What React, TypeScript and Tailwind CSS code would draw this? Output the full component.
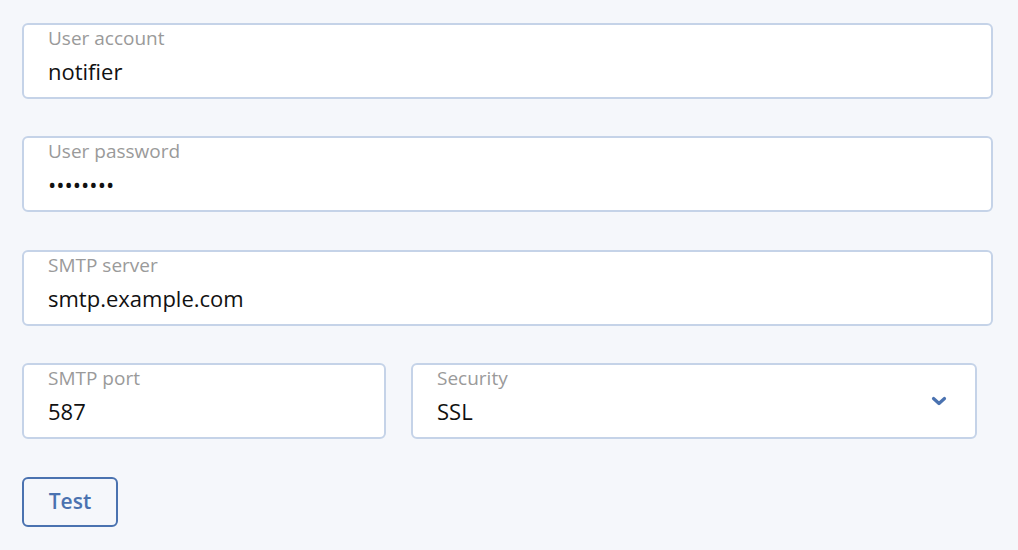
type FieldProps = {
  label: string;
  value: string;
  className?: string;
  select?: boolean;
};

function Field({ label, value, className, select }: FieldProps) {
  return (
    <div
      className={`flex h-[76px] rounded-[6px] border-2 border-[#c5d3e8] bg-white pl-[24px] pr-[28px] ${className ?? ""}`}
    >
      <div className="flex flex-1 flex-col pt-[1px]">
        <span className="text-[19px] leading-[24px] text-[#9a9a9a]">{label}</span>
        <span className="mt-[6px] text-[22px] leading-[30px] text-[#111]">{value}</span>
      </div>
      {select && (
        <div className="flex items-center">
          <svg width="16" height="10" viewBox="0 0 16 10" fill="none">
            <path d="M2.5 2.5l5.5 5 5.5-5" stroke="#4a72b0" strokeWidth="3.2" strokeLinecap="round" strokeLinejoin="round" />
          </svg>
        </div>
      )}
    </div>
  );
}

export default function App() {
  return (
    <div className="min-h-[550px] w-[1018px] bg-[#f5f7fb] px-[22px] pt-[23px] font-['Open_Sans',sans-serif]">
      <div className="flex w-[971px] flex-col gap-[37.34px]">
        <Field label="User account" value="notifier" />
        <Field label="User password" value="••••••••" />
        <Field label="SMTP server" value="smtp.example.com" />
        <div className="flex gap-[25px]">
          <Field label="SMTP port" value="587" className="w-[364px]" />
          <Field label="Security" value="SSL" className="w-[566px]" select />
        </div>
      </div>
      <button className="mt-[38px] h-[50px] w-[96px] rounded-[6px] border-2 border-[#4a72b0] text-[21px] font-semibold text-[#4a72b0]">
        Test
      </button>
    </div>
  );
}
